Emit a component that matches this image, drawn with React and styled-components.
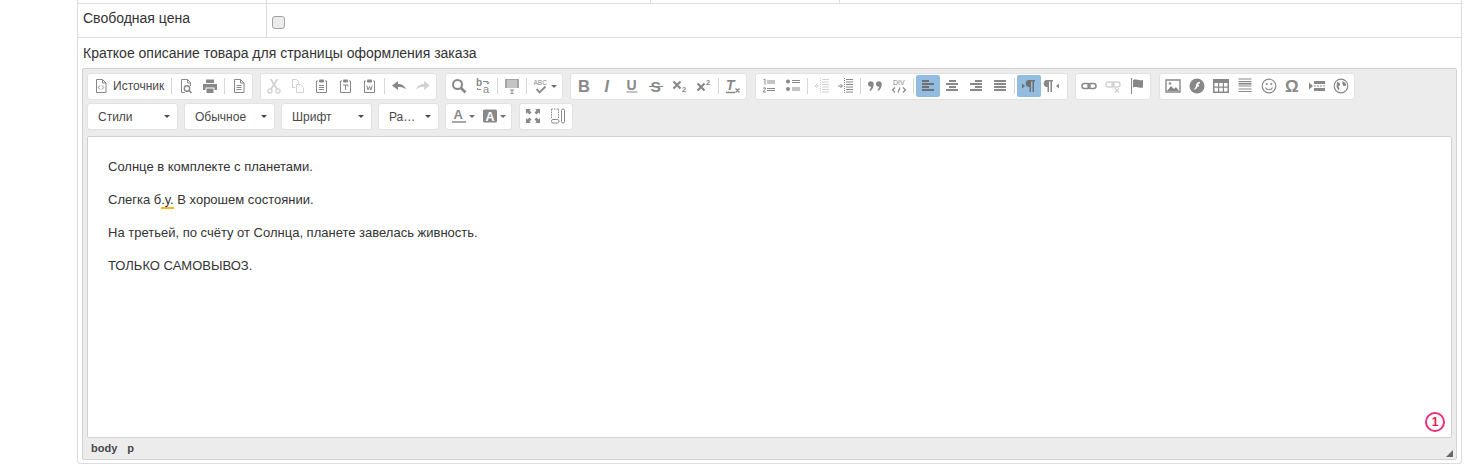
import styled, { createGlobalStyle } from "styled-components";

const Global = createGlobalStyle`
  html, body { margin: 0; padding: 0; background: #fff; }
  body { font-family: "Liberation Sans", Arial, sans-serif; color: #333; }
`;

const Page = styled.div`
  width: 1385px;
  margin-left: 77px;
  border-left: 1px solid #ddd;
  border-right: 1px solid #ddd;
  border-bottom: 1px solid #ddd;
  border-radius: 0 0 3px 3px;
  box-sizing: border-box;
`;

const StubRow = styled.div`
  display: grid;
  grid-template-columns: 189px 384px 189px 1fr;
  height: 4px;
  box-sizing: border-box;
  border-bottom: 1px solid #ddd;
`;

const StubCell = styled.div`
  border-right: 1px solid #ddd;
  &:last-child { border-right: 0; }
`;

const PriceRow = styled.div`
  display: grid;
  grid-template-columns: 189px 1fr;
  height: 34px;
  box-sizing: border-box;
  border-bottom: 1px solid #ddd;
`;

const Label = styled.div`
  padding: 6px 0 0 5px;
  font-size: 14px;
  line-height: 17px;
  border-right: 1px solid #ddd;
`;

const CheckCell = styled.div`
  padding: 12px 0 0 5px;
`;

const Check = styled.input`
  appearance: none;
  display: block;
  margin: 0;
  width: 13px;
  height: 13px;
  box-sizing: border-box;
  border: 1px solid #a3a3a3;
  border-radius: 3px;
  background: #ececec;
`;

const EditorRow = styled.div`
  padding: 7px 4px 3px 4px;
`;

const EditorTitle = styled.div`
  padding-left: 1px;
  font-size: 14px;
  line-height: 17px;
  margin-bottom: 6px;
`;

const Editor = styled.div`
  position: relative;
  height: 392px;
  box-sizing: border-box;
  border: 1px solid #d1d1d1;
  border-radius: 2px;
  background: #ececec;
  padding: 4px 4px 0;
  display: flex;
  flex-direction: column;
`;

const ToolRow = styled.div`
  display: flex;
  gap: ${(p) => p.$gap}px;
  height: 27px;
  margin-bottom: 3px;
`;

const Group = styled.div`
  display: flex;
  align-items: flex-start;
  height: 27px;
  box-sizing: border-box;
  padding: 1px;
  border: 1px solid #e2e2e2;
  border-radius: 3px;
  background: #fff;
`;

const Button = styled.div`
  display: flex;
  align-items: center;
  justify-content: ${(p) => (p.$wide ? "flex-start" : "center")};
  flex: none;
  width: ${(p) => p.$width || 24}px;
  height: 22px;
  border-radius: 2px;
  padding-left: ${(p) => (p.$wide ? 4 : 0)}px;
  box-sizing: border-box;
  background: ${(p) => (p.$active ? "#92bce0" : "transparent")};
  color: ${(p) => (p.$off ? "#d2d2d2" : "#888")};
`;

const ButtonLabel = styled.span`
  margin-left: 4px;
  font-size: 12px;
  line-height: 16px;
  color: #484848;
`;

const Sep = styled.span`
  flex: none;
  width: 1px;
  height: 16px;
  margin: 3px 2px 0;
  background: #d8d8d8;
`;

const Combo = styled.div`
  display: flex;
  align-items: center;
  justify-content: space-between;
  width: ${(p) => p.$width}px;
  height: 27px;
  box-sizing: border-box;
  padding: 0 7px 0 10px;
  border: 1px solid #e2e2e2;
  border-radius: 3px;
  background: #fff;
`;

const ComboText = styled.span`
  white-space: nowrap;
  font-size: 12px;
  line-height: 16px;
  color: #484848;
`;

const Caret = styled.span`
  flex: none;
  width: 0;
  height: 0;
  border-left: 3px solid transparent;
  border-right: 3px solid transparent;
  border-top: 3px solid #484848;
`;

const SmallCaret = styled(Caret)`
  margin-left: 2px;
  border-top-color: #6e6e6e;
`;

const Content = styled.div`
  position: relative;
  flex: none;
  height: 302px;
  box-sizing: border-box;
  margin-top: 3px;
  padding: 20px;
  border: 1px solid #d1d1d1;
  border-radius: 2px;
  background: #fff;
  font-size: 13px;
  line-height: 19px;
  color: #333;
`;

const Para = styled.p`
  margin: 0 0 14px;
`;

const Flagged = styled.span`
  box-shadow: inset 0 -2px 0 #f5b623;
  padding-bottom: 2px;
`;

const Badge = styled.div`
  position: absolute;
  right: 6px;
  bottom: 5px;
  width: 20px;
  height: 20px;
  box-sizing: border-box;
  display: flex;
  align-items: center;
  justify-content: center;
  border: 2px solid #e9307a;
  border-radius: 50%;
  font-size: 12px;
  font-weight: 700;
  color: #e9184f;
`;

const PathBar = styled.div`
  display: flex;
  gap: 10px;
  padding: 3px 0 0 4px;
  font-size: 11px;
  line-height: 14px;
  font-weight: 700;
  color: #484848;
`;

const Resizer = styled.div`
  position: absolute;
  right: 3px;
  bottom: 2px;
  width: 0;
  height: 0;
  border-left: 7px solid transparent;
  border-bottom: 7px solid #666;
`;

const Svg = styled.svg`
  display: block;
  flex: none;
  overflow: visible;
`;

const I = ({ children, w = 16 }) => (
  <Svg width={w} height="16" viewBox={`0 0 ${w} 16`} fill="currentColor">
    {children}
  </Svg>
);

const line = { stroke: "currentColor", fill: "none" };
const glyph = { fontFamily: "Liberation Sans, sans-serif", fill: "currentColor" };

const Doc = () => <path d="M3.5 1.5h6l3.5 3.5v9.5H3.5z M9.5 1.5V5H13" {...line} />;
const Board = () => (
  <>
    <path d="M4 3H2.5v11.5h10V3H11" {...line} />
    <rect x="5" y="1.5" width="5" height="3" rx="1" />
  </>
);

const icons = {
  source: (<I><Doc /><path d="M7 7.5 5.3 9.5 7 11.5M9 7.5l1.7 2L9 11.5" {...line} /></I>),
  preview: (<I><path d="M7 14.5H3.5v-13h6l3 3V8M9.5 1.5V5h3" {...line} /><circle cx="9" cy="10.5" r="2.7" {...line} strokeWidth="1.4" /><path d="M11 12.5l2.5 2.5" {...line} strokeWidth="1.6" /></I>),
  print: (<I><path d="M4 1.5h8V5H4zM1 6h14v6h-2.5V9.5h-9V12H1z" /><path d="M4.5 10.5h7V15h-7z" /></I>),
  page: (<I><Doc /><path d="M5.5 7.5h5M5.5 9.5h5M5.5 11.5h5" {...line} /></I>),
  cut: (<I><path d="M4.5 1 11 11M11.5 1 5 11" {...line} strokeWidth="1.7" /><circle cx="4" cy="13" r="2" {...line} strokeWidth="1.4" /><circle cx="12" cy="13" r="2" {...line} strokeWidth="1.4" /></I>),
  copy: (<I><path d="M2.5 1.5h4l2 2v2M2.5 1.5v8h3" {...line} /><path d="M6.5 6.5h4l3 3v5h-7z" {...line} /></I>),
  paste: (<I><Board /><path d="M5 7.5h5M5 9.5h5M5 11.5h5" {...line} /></I>),
  pasteText: (<I><Board /><path d="M5 7h5v1.5M7.5 7v5" {...line} /></I>),
  pasteWord: (<I><Board /><path d="M4.8 7.5l1.2 4.5 1.5-3.5 1.5 3.5 1.2-4.5" {...line} /></I>),
  undo: (<I><path d="M7 3v3c4 0 6.5 1.5 8 5.5-2-2-4.5-2.5-8-2.5v3L1 7.5z" /></I>),
  redo: (<I><path d="M9 3v3C5 6 2.5 7.5 1 11.5c2-2 4.5-2.5 8-2.5v3l6-4.5z" /></I>),
  find: (<I><circle cx="6.5" cy="6.5" r="4.5" {...line} strokeWidth="2" /><path d="M10 10l4.5 4.5" {...line} strokeWidth="2.6" /></I>),
  replace: (<I><text x="1" y="8" fontSize="10" fontWeight="700" {...glyph}>b</text><text x="8" y="15" fontSize="11" {...glyph}>a</text><path d="M8 3.5h5v2M11.5 4.5 13 6l1.5-1.5M6 11.5H2.5V10" {...line} /></I>),
  templates: (<I><path d="M1 1h14v9H1z" opacity=".75" /><path d="M3 3h10M3 5h10M3 7h10M3 9h10" stroke="#fff" strokeWidth=".7" /><path d="M6 12h4M8 12v3.5M6.5 15.5h3" {...line} /></I>),
  spell: (
    <>
      <I>
        <text x="0.5" y="7" fontSize="6.5" {...glyph}>ABC</text>
        <path d="M3.5 11l3 3.5 6-6" {...line} strokeWidth="1.8" />
      </I>
      <SmallCaret />
    </>
  ),
  bold: (<I><text x="2" y="14" fontSize="16.5" fontWeight="700" {...glyph}>B</text></I>),
  italic: (<I><text x="4.5" y="14" fontSize="16" fontWeight="700" fontStyle="italic" {...glyph}>I</text></I>),
  underline: (<I><text x="2.5" y="11.5" fontSize="14" fontWeight="700" {...glyph}>U</text><path d="M2.5 14h11" {...line} /></I>),
  strike: (<I><text x="2.5" y="13.5" fontSize="15.5" fontWeight="700" {...glyph}>S</text><path d="M1 8.5h14" {...line} /></I>),
  sub: (<I><path d="M1.5 3.5l7 7M8.5 3.5l-7 7" {...line} strokeWidth="2.2" /><text x="10" y="14" fontSize="7.5" fontWeight="700" {...glyph}>2</text></I>),
  sup: (<I><path d="M1.5 5.5l7 7M8.5 5.5l-7 7" {...line} strokeWidth="2.2" /><text x="10" y="7" fontSize="7.5" fontWeight="700" {...glyph}>2</text></I>),
  clear: (<I><text x="1" y="12" fontSize="14" fontWeight="700" fontStyle="italic" {...glyph}>T</text><path d="M1 14.5h9M10.5 10.5l4 4M14.5 10.5l-4 4" {...line} strokeWidth="1.3" /></I>),
  numbered: (<I><path d="M6 3h8M6 5h8M6 10.5h8M6 12.5h8" {...line} /><path d="M2.5 1.5H4v5M2 10h3l-3 4h3" {...line} /></I>),
  bulleted: (<I><circle cx="3" cy="3.5" r="2" /><circle cx="3" cy="11" r="2" /><path d="M7 2.5h8M7 4.5h8M7 10h8M7 12h8" {...line} /></I>),
  outdent: (<I><path d="M8 1.5h7M8 4h7M8 6.5h7M8 9h7M8 11.5h7M8 14h7" {...line} /><path d="M6.5 0v16" {...line} strokeDasharray="1 1" /><path d="M1 8h4M3 6 1 8l2 2" {...line} /></I>),
  indent: (<I><path d="M8 1.5h7M8 4h7M8 6.5h7M8 9h7M8 11.5h7M8 14h7" {...line} /><path d="M6.5 0v16" {...line} strokeDasharray="1 1" /><path d="M0 8h4M2.5 6l2 2-2 2" {...line} /></I>),
  quote: (<I><circle cx="3.8" cy="6" r="2.8" /><path d="M6.6 6c.2 3-1 5.5-3.5 7l-.8-1c1.5-1 2-3 2-5zM14.6 6c.2 3-1 5.5-3.5 7l-.8-1c1.5-1 2-3 2-5z" /><circle cx="11.8" cy="6" r="2.8" /></I>),
  div: (<I><text x="2" y="7" fontSize="7" {...glyph}>DIV</text><path d="M4 9.5 1.5 12 4 14.5M12 9.5l2.5 2.5-2.5 2.5M9 9.5l-2 5" {...line} strokeWidth="1.2" /></I>),
  left: (<I><path d="M2 3h7M2 6h12M2 9h7M2 12h12" stroke="#6f6f6f" strokeWidth="1.8" /></I>),
  center: (<I><path d="M5 3h7M2 6h12M5 9h7M2 12h12" {...line} strokeWidth="1.8" /></I>),
  right: (<I><path d="M7 3h7M2 6h12M7 9h7M2 12h12" {...line} strokeWidth="1.8" /></I>),
  justify: (<I><path d="M2 3h12M2 6h12M2 9h12M2 12h12" {...line} strokeWidth="1.8" /></I>),
  ltr: (<I><path d="M1 5.5 4 8l-3 2.5z" fill="#6f6f6f" /><path d="M8 2h6v1.5h-1V14h-1.5V3.5H10V14H8.5V9A3.5 3.5 0 0 1 8 2z" fill="#6f6f6f" /></I>),
  rtl: (<I><path d="M2 2h6v1.5H7V14H5.5V3.5H4V14H2.5V9A3.5 3.5 0 0 1 2 2z" /><path d="M14 5.5 11 8l3 2.5z" /></I>),
  link: (<I><rect x="1" y="5.5" width="8" height="5" rx="2.5" {...line} strokeWidth="1.5" /><rect x="7" y="5.5" width="8" height="5" rx="2.5" {...line} strokeWidth="1.5" /></I>),
  unlink: (<I><rect x="1" y="4" width="8" height="5" rx="2.5" {...line} strokeWidth="1.5" /><rect x="7" y="4" width="8" height="5" rx="2.5" {...line} strokeWidth="1.5" /><path d="M10 10.5l4 4M14 10.5l-4 4" {...line} strokeWidth="1.3" /></I>),
  anchor: (<I><path d="M2.5 0v16" {...line} /><path d="M4 2c3-1.5 5 1 10 0v7.5c-5 1-7-1.5-10 0z" /></I>),
  image: (<I><path d="M1 2h14v12H1z" {...line} strokeWidth="1.4" /><path d="M2 13l4-5 3 3 2-2 3 4z" /><circle cx="5" cy="5.5" r="1.3" /></I>),
  flash: (<I><circle cx="8" cy="8" r="7.5" /><path d="M11 4c-3 0-3.5 1.5-4 3.5s-1 3.5-3 4c2.5.5 4-1 4.5-3H10V7H9c.2-1 .8-1.5 2-1.5z" fill="#fff" /></I>),
  table: (<I><path d="M0 1h16v14H0z" /><path d="M1.5 5H5v3.5H1.5zM6.2 5h3.6v3.5H6.2zM11 5h3.5v3.5H11zM1.5 9.8H5v3.7H1.5zM6.2 9.8h3.6v3.700H6.2zM11 9.8h3.5v3.7H11z" fill="#fff" /></I>),
  hr: (<I><path d="M1.5 1h13M1.5 3.5h13M1.5 8h13M1.5 11h13M1.5 13.5h13" {...line} strokeWidth="1.1" /><path d="M1.5 5.7h13" {...line} strokeWidth="1.8" /></I>),
  smiley: (<I><circle cx="8" cy="8" r="6.8" {...line} strokeWidth="1.2" /><circle cx="5.7" cy="6" r="1" /><circle cx="10.3" cy="6" r="1" /><path d="M4.5 9.5c1.5 3 5.5 3 7 0" {...line} strokeWidth="1.1" /></I>),
  omega: (<I><text x="0" y="14" fontSize="17" fontWeight="700" {...glyph}>Ω</text></I>),
  pagebreak: (<I><path d="M0 4.5 4 8l-4 3.5z" /><path d="M5 3h11v3H5zM5 10h11v3H5z" /><path d="M5 8h11" {...line} strokeDasharray="2 1" /></I>),
  iframe: (<I><circle cx="8" cy="8" r="6.8" {...line} strokeWidth="1.2" /><path d="M4 4l2.5.8.8 2-2 1.700 1.200 2-.8 2L3.500 9zM9.500 3l3 2 .8 2.500-2.800.8-1.200-2.500z" /></I>),
  maximize: (<I><path d="M1 1h5L4.5 2.500l2 2-2 2-2-2L1 6zM15 1v5l-1.500-1.500-2 2-2-2 2-2L10 1zM1 15v-5l1.500 1.500 2-2 2 2-2 2L6 15zM15 15h-5l1.500-1.500-2-2 2-2 2 2L15 10z" /></I>),
  blocks: (<I><path d="M1.500 1h7M1.500 1v10M8.500 1v10" {...line} strokeDasharray="1.500 1" /><rect x="1.500" y="11.500" width="7.500" height="3.500" rx="1.500" {...line} /><rect x="11.500" y="1" width="3" height="14" rx="1.500" {...line} /></I>),
  colorText: (<I><text x="2.500" y="11" fontSize="13" fontWeight="700" {...glyph}>A</text><path d="M1 14h14" {...line} strokeWidth="1.500" /></I>),
  colorBack: (<I><rect x="1" y="1.500" width="14" height="13" rx="1.500" /><text x="3.500" y="12.500" fontSize="12.500" fontWeight="700" fill="#fff" fontFamily="Liberation Sans, sans-serif">A</text></I>),
};

const Btn = ({ name, ...rest }) => <Button {...rest}>{icons[name]}</Button>;

export default function App() {
  return (
    <Page>
      <Global />
      <StubRow>
        <StubCell />
        <StubCell />
        <StubCell />
        <StubCell />
      </StubRow>
      <PriceRow>
        <Label>Свободная цена</Label>
        <CheckCell>
          <Check type="checkbox" />
        </CheckCell>
      </PriceRow>
      <EditorRow>
        <EditorTitle>Краткое описание товара для страницы оформления заказа</EditorTitle>
        <Editor>
          <ToolRow $gap={7.5}>
            <Group>
              <Button $wide $width={79.5}>
                {icons.source}
                <ButtonLabel>Источник</ButtonLabel>
              </Button>
              <Sep />
              <Btn name="preview" />
              <Btn name="print" />
              <Sep />
              <Btn name="page" />
            </Group>
            <Group>
              <Btn name="cut" $off />
              <Btn name="copy" $off />
              <Btn name="paste" />
              <Btn name="pasteText" />
              <Btn name="pasteWord" />
              <Sep />
              <Btn name="undo" />
              <Btn name="redo" $off />
            </Group>
            <Group>
              <Btn name="find" />
              <Btn name="replace" />
              <Sep />
              <Btn name="templates" />
              <Sep />
              <Btn name="spell" $width={32} />
            </Group>
            <Group>
              <Btn name="bold" />
              <Btn name="italic" />
              <Btn name="underline" />
              <Btn name="strike" />
              <Btn name="sub" />
              <Btn name="sup" />
              <Sep />
              <Btn name="clear" />
            </Group>
            <Group>
              <Btn name="numbered" />
              <Btn name="bulleted" />
              <Sep />
              <Btn name="outdent" $off />
              <Btn name="indent" />
              <Sep />
              <Btn name="quote" />
              <Btn name="div" />
              <Sep />
              <Btn name="left" $active />
              <Btn name="center" />
              <Btn name="right" />
              <Btn name="justify" />
              <Sep />
              <Btn name="ltr" $active />
              <Btn name="rtl" $width={25} />
            </Group>
            <Group>
              <Btn name="link" />
              <Btn name="unlink" $off />
              <Btn name="anchor" />
            </Group>
            <Group>
              <Btn name="image" />
              <Btn name="flash" />
              <Btn name="table" />
              <Btn name="hr" />
              <Btn name="smiley" />
              <Btn name="omega" />
              <Btn name="pagebreak" />
              <Btn name="iframe" />
            </Group>
          </ToolRow>
          <ToolRow $gap={6.5}>
            <Combo $width={90.5}>
              <ComboText>Стили</ComboText>
              <Caret />
            </Combo>
            <Combo $width={90.5}>
              <ComboText>Обычное</ComboText>
              <Caret />
            </Combo>
            <Combo $width={90.5}>
              <ComboText>Шрифт</ComboText>
              <Caret />
            </Combo>
            <Combo $width={60.5}>
              <ComboText>Ра…</ComboText>
              <Caret />
            </Combo>
            <Group>
              <Button $width={31.5}>
                {icons.colorText}
                <SmallCaret />
              </Button>
              <Button $width={31.5}>
                {icons.colorBack}
                <SmallCaret />
              </Button>
            </Group>
            <Group>
              <Btn name="maximize" $width={25} />
              <Btn name="blocks" $width={25} />
            </Group>
          </ToolRow>
          <Content>
            <Para>Солнце в комплекте с планетами.</Para>
            <Para>
              Слегка б<Flagged>.у.</Flagged> В хорошем состоянии.
            </Para>
            <Para>На третьей, по счёту от Солнца, планете завелась живность.</Para>
            <Para>ТОЛЬКО САМОВЫВОЗ.</Para>
            <Badge>1</Badge>
          </Content>
          <PathBar>
            <span>body</span>
            <span>p</span>
          </PathBar>
          <Resizer />
        </Editor>
      </EditorRow>
    </Page>
  );
}
